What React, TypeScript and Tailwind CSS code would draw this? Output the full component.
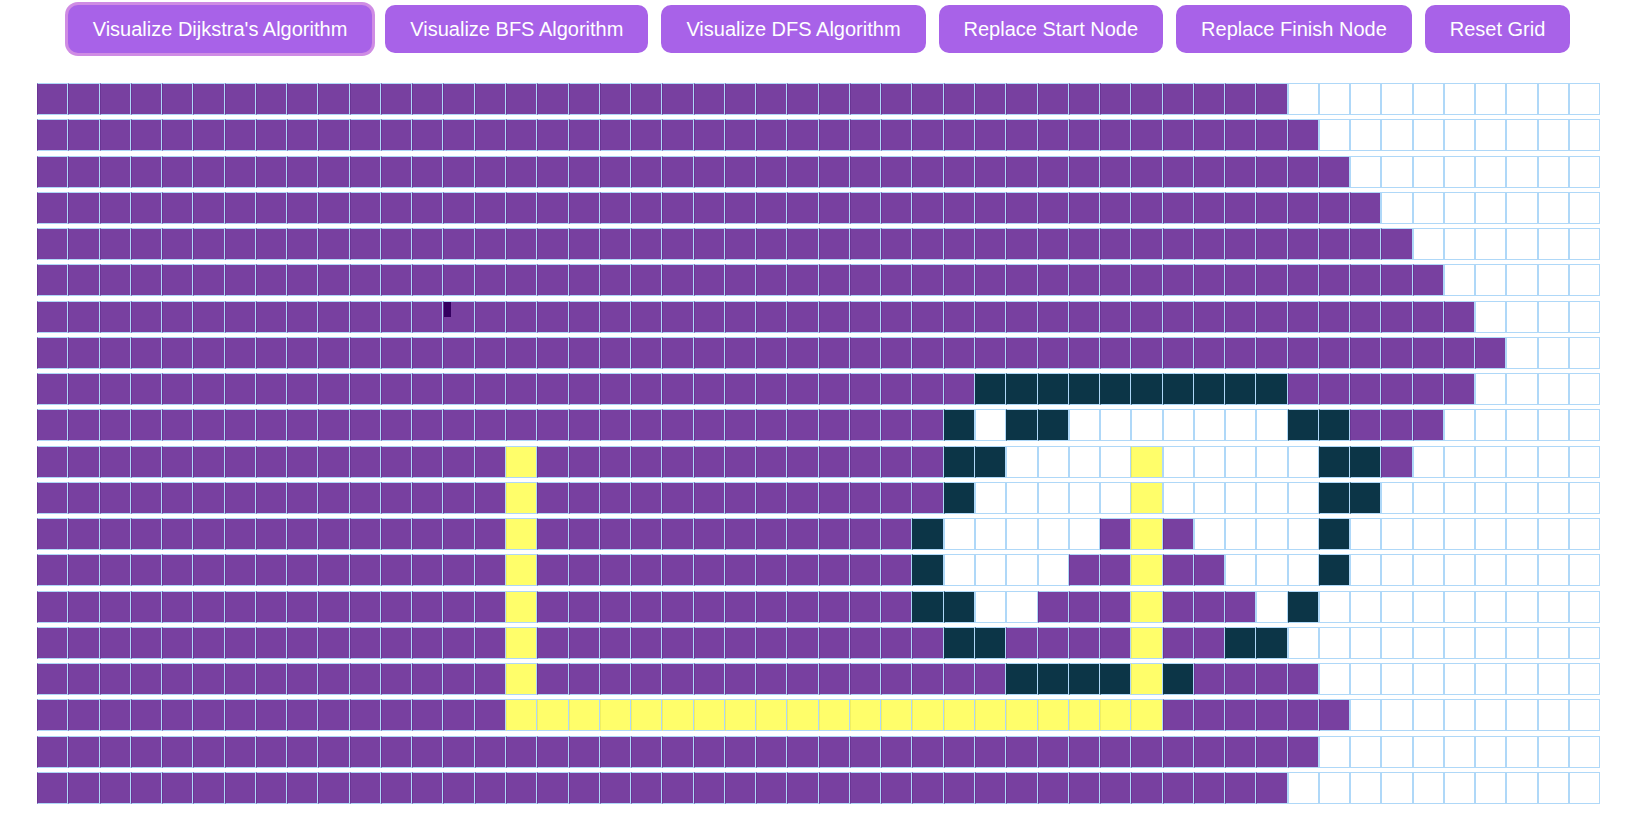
import React from 'react';

// V = visited, W = wall, P = shortest path, . = unvisited
const r = (ch: string, n: number) => ch.repeat(n);

const rows: string[] = [
  ...Array.from({ length: 8 }, (_, i) => r('V', 40 + i) + r('.', 10 - i)),
  r('V', 30) + r('W', 10) + r('V', 6) + r('.', 4),
  r('V', 29) + 'W' + '.' + 'WW' + r('.', 7) + 'WW' + 'VVV' + r('.', 5),
  r('V', 15) + 'P' + r('V', 13) + 'WW' + r('.', 4) + 'P' + r('.', 5) + 'WW' + 'V' + r('.', 6),
  r('V', 15) + 'P' + r('V', 13) + 'W' + r('.', 5) + 'P' + r('.', 5) + 'WW' + r('.', 7),
  r('V', 15) + 'P' + r('V', 12) + 'W' + r('.', 5) + 'VPV' + r('.', 4) + 'W' + r('.', 8),
  r('V', 15) + 'P' + r('V', 12) + 'W' + r('.', 4) + 'VVPVV' + r('.', 3) + 'W' + r('.', 8),
  r('V', 15) + 'P' + r('V', 12) + 'WW' + '..' + 'VVVPVVV' + '.' + 'W' + r('.', 9),
  r('V', 15) + 'P' + r('V', 13) + 'WW' + 'VVVV' + 'P' + 'VV' + 'WW' + r('.', 10),
  r('V', 15) + 'P' + r('V', 15) + 'WWWW' + 'P' + 'W' + 'VVVV' + r('.', 9),
  r('V', 15) + r('P', 21) + r('V', 6) + r('.', 8),
  r('V', 41) + r('.', 9),
  r('V', 40) + r('.', 10),
];

const cellClass: Record<string, string> = {
  V: 'bg-[#7840a0] border-[#afd8f8] border-l-[#6a3594]',
  W: 'bg-[#0c3547] border-[#afd8f8] border-l-[#0c3547]',
  P: 'bg-[#fffe6a] border-[#afd8f8] border-l-[#f0ef60]',
  '.': 'bg-white border-[#afd8f8]',
};

const buttons = [
  "Visualize Dijkstra's Algorithm",
  'Visualize BFS Algorithm',
  'Visualize DFS Algorithm',
  'Replace Start Node',
  'Replace Finish Node',
  'Reset Grid',
];

export default function App() {
  return (
    <div className="min-h-screen w-full bg-white pt-[5px]" style={{ fontFamily: '"Liberation Sans", Arial, sans-serif' }}>
      <div className="flex justify-center gap-[13px] pr-[3px]">
        {buttons.map((label, i) => (
          <button
            key={label}
            className={
              'h-12 px-[25px] rounded-[10px] bg-[#a862e8] text-white text-[20px] leading-none whitespace-nowrap ' +
              (i === 0 ? 'ring-[3px] ring-[#cf8ce4]' : '')
            }
          >
            {label}
          </button>
        ))}
      </div>

      <div className="mt-[30px] ml-[37px] w-[1563px] flex flex-col gap-[4.25px]">
        {rows.map((row, ri) => (
          <div key={ri} className="flex h-[32px]">
            {row.split('').map((ch, ci) => (
              <div key={ci} className={'relative flex-1 border ' + cellClass[ch]}>
                {ri === 6 && ci === 13 && (
                  <span className="absolute left-0 top-0 w-[7px] h-[15px] bg-[#34005f]" />
                )}
              </div>
            ))}
          </div>
        ))}
      </div>
    </div>
  );
}
